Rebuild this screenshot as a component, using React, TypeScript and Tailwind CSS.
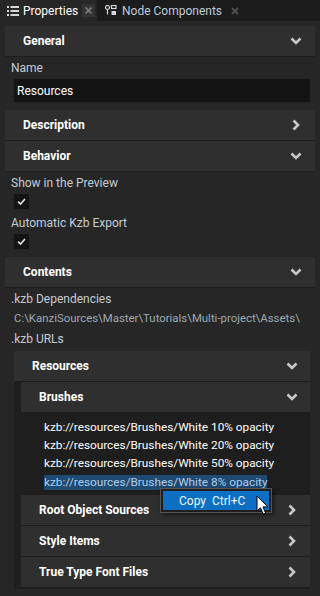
import React from "react"

function Chevron({ open }: { open: boolean }) {
  return (
    <svg width="12" height="12" viewBox="0 0 12 12" className="shrink-0">
      {open ? (
        <polyline points="1.5,3.5 6,8 10.5,3.5" fill="none" stroke="#c8c8c8" strokeWidth="2.6" />
      ) : (
        <polyline points="3.5,1.5 8,6 3.5,10.5" fill="none" stroke="#c8c8c8" strokeWidth="2.6" />
      )}
    </svg>
  )
}

function Header({ title, open, inner }: { title: string; open: boolean; inner?: boolean }) {
  return (
    <div
      className={
        "h-[31px] flex items-center justify-between bg-[#2f2f2f] border-b border-[#1c1c1c] pl-[18px] " +
        (inner ? "pr-[12px]" : "pr-[13px]")
      }>
      <span className="font-bold text-white text-[12px]">{title}</span>
      <Chevron open={open} />
    </div>
  )
}

function Label({ text }: { text: string }) {
  return <div className="h-[22px] flex items-center pl-[6px] text-[#c3ccd5] text-[12px]">{text}</div>
}

function Check() {
  return (
    <div className="w-[15px] h-[15px] bg-[#141414] flex items-center justify-center ml-[9px]">
      <svg width="9" height="9" viewBox="0 0 9 9">
        <polyline points="1,4.5 3.5,7 8,2" fill="none" stroke="#e6e6e6" strokeWidth="1.6" />
      </svg>
    </div>
  )
}

function Cursor() {
  return (
    <svg width="14" height="21" viewBox="0 0 14 21">
      <path
        d="M1 1 L1 16 L4.5 12.8 L7.2 19 L9.6 18 L7 11.9 L12 11.9 Z"
        fill="#ffffff"
        stroke="#000000"
        strokeWidth="1"
        strokeLinejoin="round"
      />
    </svg>
  )
}

const urls = [
  "kzb://resources/Brushes/White 10% opacity",
  "kzb://resources/Brushes/White 20% opacity",
  "kzb://resources/Brushes/White 50% opacity"
]

export default function App() {
  return (
    <div className="relative w-[320px] h-[596px] overflow-hidden bg-[#262626] font-[family-name:Roboto,sans-serif] text-[12px]">
      {/* tab bar */}
      <div className="h-[21px] flex bg-[#1b1b1b]">
        <div className="w-[97px] flex items-center bg-[#262626] pl-[7px]">
          <svg width="12" height="10" viewBox="0 0 12 10">
            <rect x="0" y="0" width="2" height="2" fill="#d8d8d8" />
            <rect x="0" y="4" width="2" height="2" fill="#d8d8d8" />
            <rect x="0" y="8" width="2" height="2" fill="#d8d8d8" />
            <rect x="3.5" y="0" width="8.5" height="2" fill="#d8d8d8" />
            <rect x="3.5" y="4" width="8.5" height="2" fill="#d8d8d8" />
            <rect x="3.5" y="8" width="8.5" height="2" fill="#d8d8d8" />
          </svg>
          <span className="ml-[4px] text-white text-[12px]">Properties</span>
          <div className="ml-auto mr-[2px] w-[13px] h-[13px] bg-[#333333] flex items-center justify-center">
            <svg width="7" height="7" viewBox="0 0 7 7">
              <path d="M0.5 0.5 L6.5 6.5 M6.5 0.5 L0.5 6.5" stroke="#777777" strokeWidth="1.8" />
            </svg>
          </div>
        </div>
        <div className="flex items-center pl-[8px]">
          <svg width="12" height="11" viewBox="0 0 12 11">
            <circle cx="2.5" cy="2.5" r="2" fill="none" stroke="#d0d8e0" strokeWidth="1.2" />
            <rect x="1.9" y="4.5" width="1.2" height="5" fill="#d0d8e0" />
            <rect x="6.5" y="0.5" width="4.5" height="3" fill="none" stroke="#d0d8e0" strokeWidth="1.2" />
            <rect x="6.5" y="6" width="4.5" height="4" fill="#d0d8e0" />
          </svg>
          <span className="ml-[5px] text-[#bccbda] text-[12px]">Node Components</span>
          <svg width="8" height="8" viewBox="0 0 8 8" className="ml-[9px]">
            <path d="M1 1 L7 7 M7 1 L1 7" stroke="#4f4f4f" strokeWidth="1.8" />
          </svg>
        </div>
      </div>

      {/* properties */}
      <div className="pt-[5px] px-[5px]">
        <Header title="General" open />
        <Label text="Name" />
        <div className="ml-[9px] mr-[5px] h-[23px] bg-[#141414] flex items-center pl-[3px] text-white mb-[8px]">
          Resources
        </div>
        <Header title="Description" open={false} />
        <Header title="Behavior" open />
        <Label text="Show in the Preview" />
        <div className="h-[18px]">
          <Check />
        </div>
        <Label text="Automatic Kzb Export" />
        <div className="h-[23px]">
          <Check />
        </div>
        <Header title="Contents" open />
        <div className="pt-px">
          <div className="h-[20px] flex items-center pl-[6px] text-[#c3ccd5]">.kzb Dependencies</div>
          <div className="h-[20px] flex items-center pl-[9px] text-[#9ea8b2] text-[11.4px] whitespace-nowrap">
            C:\KanziSources\Master\Tutorials\Multi-project\Assets\
          </div>
          <div className="h-[20px] flex items-center pl-[6px] text-[#c3ccd5]">.kzb URLs</div>
        </div>
        <div className="ml-[9px] mr-[5px] mt-[2px] bg-[#1e1e1e] pb-px">
          <Header title="Resources" open inner />
          <div className="ml-[7px]">
            <Header title="Brushes" open inner />
            <div className="pt-[6px] pb-[4px] pl-[23px] text-[11.8px]">
              {urls.map((u) => (
                <div key={u} className="h-[18px] flex items-center text-white whitespace-nowrap">
                  {u}
                </div>
              ))}
              <div className="h-[18px] flex items-center whitespace-nowrap">
                <span className="leading-[15px] bg-[#1f4a72] text-[#aecdec]">
                  kzb://resources/Brushes/White 8% opacity
                </span>
              </div>
            </div>
            <Header title="Root Object Sources" open={false} inner />
            <Header title="Style Items" open={false} inner />
            <Header title="True Type Font Files" open={false} inner />
          </div>
        </div>
      </div>

      {/* context menu */}
      <div className="absolute left-[160px] top-[488px] w-[112px] h-[25px] bg-[#1e1e1e] border border-[#555555] p-[2px] shadow-[2px_2px_4px_rgba(0,0,0,0.5)]">
        <div className="h-full bg-[#0c6fc3] flex items-center pl-[16px] text-[#eef4fa] whitespace-pre">
          Copy  Ctrl+C
        </div>
      </div>
      <div className="absolute left-[256px] top-[495px]">
        <Cursor />
      </div>
    </div>
  )
}
